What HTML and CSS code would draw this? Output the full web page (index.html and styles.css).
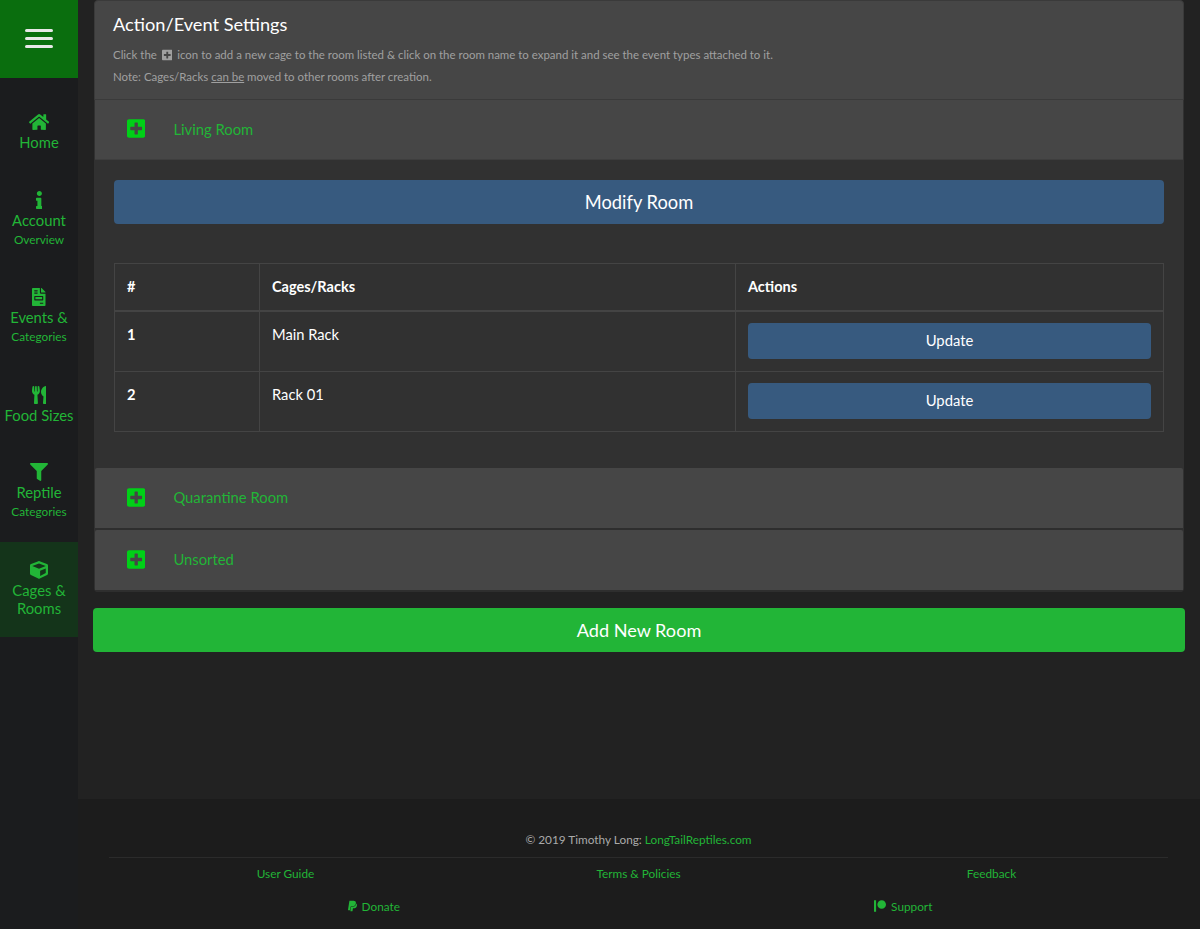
FILE: index.html
```html
<!DOCTYPE html>
<html>
<head>
	<title>Cages &amp; Rooms</title>
	<link rel="stylesheet" href="styles.css">
</head>
<body>
	<div class="page">
		<nav class="sidebar">
			<div class="menu-toggle">
				<span class="bar"></span>
				<span class="bar"></span>
				<span class="bar"></span>
			</div>
			<ul class="nav">
				<li class="nav-item nav-short">
					<svg class="nav-icon" viewBox="0 0 576 512"><path d="M280.37 148.26L96 300.11V464a16 16 0 0 0 16 16l112.06-.29a16 16 0 0 0 15.92-16V368a16 16 0 0 1 16-16h64a16 16 0 0 1 16 16v95.64a16 16 0 0 0 16 16.05L464 480a16 16 0 0 0 16-16V300L295.67 148.26a12.19 12.19 0 0 0-15.3 0zM571.6 251.47L488 182.56V44.05a12 12 0 0 0-12-12h-56a12 12 0 0 0-12 12v72.61L318.47 43a48 48 0 0 0-61 0L4.34 251.47a12 12 0 0 0-1.6 16.9l25.5 31A12 12 0 0 0 45.15 301l235.22-193.74a12.19 12.19 0 0 1 15.3 0L530.9 301a12 12 0 0 0 16.9-1.6l25.5-31a12 12 0 0 0-1.7-16.93z"/></svg>
					<span class="nav-label">Home</span>
				</li>
				<li class="nav-item">
					<svg class="nav-icon" viewBox="0 0 192 512"><path d="M20 424.229h20V279.771H20c-11.046 0-20-8.954-20-20V212c0-11.046 8.954-20 20-20h112c11.046 0 20 8.954 20 20v212.229h20c11.046 0 20 8.954 20 20V492c0 11.046-8.954 20-20 20H20c-11.046 0-20-8.954-20-20v-47.771c0-11.046 8.954-20 20-20zM96 0C56.235 0 24 32.235 24 72s32.235 72 72 72 72-32.235 72-72S135.764 0 96 0z"/></svg>
					<span class="nav-label">Account</span>
					<span class="nav-sub">Overview</span>
				</li>
				<li class="nav-item">
					<svg class="nav-icon" viewBox="0 0 384 512"><path d="M288 256H96v64h192v-64zm89-151L279.1 7c-4.5-4.5-10.6-7-17-7H256v128h128v-6.1c0-6.3-2.5-12.4-7-16.9zm-153 31V0H24C10.7 0 0 10.7 0 24v464c0 13.3 10.7 24 24 24h336c13.3 0 24-10.7 24-24V160H248c-13.2 0-24-10.8-24-24zM64 72c0-4.42 3.58-8 8-8h80c4.42 0 8 3.58 8 8v16c0 4.42-3.58 8-8 8H72c-4.42 0-8-3.58-8-8V72zm0 64c0-4.42 3.58-8 8-8h80c4.42 0 8 3.58 8 8v16c0 4.42-3.58 8-8 8H72c-4.42 0-8-3.58-8-8v-16zm256 304c0 4.42-3.58 8-8 8h-80c-4.42 0-8-3.58-8-8v-16c0-4.42 3.58-8 8-8h80c4.42 0 8 3.58 8 8v16zm0-200v96c0 8.84-7.16 16-16 16H80c-8.84 0-16-7.16-16-16v-96c0-8.84 7.16-16 16-16h224c8.84 0 16 7.16 16 16z"/></svg>
					<span class="nav-label">Events &amp;</span>
					<span class="nav-sub">Categories</span>
				</li>
				<li class="nav-item nav-short">
					<svg class="nav-icon" viewBox="0 0 416 512"><path d="M207.9 15.2c.8 4.7 16.1 94.5 16.1 128.8 0 52.3-27.8 89.6-68.9 104.6L168 486.7c.7 13.7-10.2 25.3-24 25.3H80c-13.7 0-24.7-11.5-24-25.3l12.9-238.1C27.7 233.6 0 196.2 0 144 0 109.6 15.3 19.9 16.1 15.2 19.3-5.1 61.4-5.4 64 16.3v141.2c1.3 3.4 15.1 3.2 16 0 1.4-25.3 7.9-139.2 8-141.8 3.3-20.8 44.7-20.8 47.9 0 .2 2.7 6.6 116.5 8 141.8.9 3.2 14.8 3.4 16 0V16.3c2.6-21.6 44.8-21.4 48-1.1zm119.2 285.7l-15 185.1c-1.2 14 9.9 26 23.9 26h56c13.3 0 24-10.7 24-24V24c0-13.2-10.7-24-24-24-82.5 0-221.4 178.5-64.9 300.9z"/></svg>
					<span class="nav-label">Food Sizes</span>
				</li>
				<li class="nav-item">
					<svg class="nav-icon" viewBox="0 0 512 512"><path d="M487.976 0H24.028C2.71 0-8.047 25.866 7.058 40.971L192 225.941V432c0 7.831 3.821 15.17 10.237 19.662l80 55.98C298.02 518.69 320 507.493 320 487.98V225.941l184.947-184.97C520.021 25.896 509.338 0 487.976 0z"/></svg>
					<span class="nav-label">Reptile</span>
					<span class="nav-sub">Categories</span>
				</li>
				<li class="nav-item active">
					<svg class="nav-icon" viewBox="0 0 512 512"><path d="M239.1 6.3l-208 78c-18.7 7-31.1 25-31.1 45v225.1c0 18.2 10.3 34.8 26.5 42.9l208 104c13.5 6.8 29.4 6.8 42.9 0l208-104c16.3-8.1 26.5-24.8 26.5-42.9V129.3c0-20-12.4-37.9-31.1-44.9l-208-78C262 2.2 250 2.2 239.1 6.3zM256 68.4l192 72v1.1l-192 78-192-78v-1.1l192-72zm32 356V275.5l160-65v133.9l-160 80z"/></svg>
					<span class="nav-label">Cages &amp;</span>
					<span class="nav-label">Rooms</span>
				</li>
			</ul>
		</nav>

		<div class="right">
			<main class="content">
				<section class="card">
					<div class="intro">
						<h4 class="intro-title">Action/Event Settings</h4>
						<p class="intro-text">Click the <svg class="inline-plus" viewBox="0 0 448 512"><path d="M400 32H48C21.5 32 0 53.5 0 80v352c0 26.5 21.5 48 48 48h352c26.5 0 48-21.5 48-48V80c0-26.5-21.5-48-48-48zm-32 252c0 6.6-5.4 12-12 12h-92v92c0 6.6-5.4 12-12 12h-56c-6.6 0-12-5.4-12-12v-92H92c-6.6 0-12-5.4-12-12v-56c0-6.6 5.4-12 12-12h92v-92c0-6.6 5.4-12 12-12h56c6.6 0 12 5.4 12 12v92h92c6.6 0 12 5.4 12 12v56z"/></svg> icon to add a new cage to the room listed &amp; click on the room name to expand it and see the event types attached to it.</p>
						<p class="intro-text">Note: Cages/Racks <u>can be</u> moved to other rooms after creation.</p>
					</div>

					<div class="room-head">
						<svg class="room-plus" viewBox="0 0 448 512"><path d="M400 32H48C21.5 32 0 53.5 0 80v352c0 26.5 21.5 48 48 48h352c26.5 0 48-21.5 48-48V80c0-26.5-21.5-48-48-48zm-32 252c0 6.6-5.4 12-12 12h-92v92c0 6.6-5.4 12-12 12h-56c-6.6 0-12-5.4-12-12v-92H92c-6.6 0-12-5.4-12-12v-56c0-6.6 5.4-12 12-12h92v-92c0-6.6 5.4-12 12-12h56c6.6 0 12 5.4 12 12v92h92c6.6 0 12 5.4 12 12v56z"/></svg>
						<span class="room-name">Living Room</span>
					</div>
					<div class="room-body">
						<button class="btn btn-blue btn-wide">Modify Room</button>
						<table class="cages">
							<thead>
								<tr>
									<th class="col-num">#</th>
									<th class="col-name">Cages/Racks</th>
									<th>Actions</th>
								</tr>
							</thead>
							<tbody>
								<tr>
									<th>1</th>
									<td>Main Rack</td>
									<td><button class="btn btn-blue btn-row">Update</button></td>
								</tr>
								<tr>
									<th>2</th>
									<td>Rack 01</td>
									<td><button class="btn btn-blue btn-row">Update</button></td>
								</tr>
							</tbody>
						</table>
					</div>

					<div class="room-head room-closed">
						<svg class="room-plus" viewBox="0 0 448 512"><path d="M400 32H48C21.5 32 0 53.5 0 80v352c0 26.5 21.5 48 48 48h352c26.5 0 48-21.5 48-48V80c0-26.5-21.5-48-48-48zm-32 252c0 6.6-5.4 12-12 12h-92v92c0 6.6-5.4 12-12 12h-56c-6.6 0-12-5.4-12-12v-92H92c-6.6 0-12-5.4-12-12v-56c0-6.6 5.4-12 12-12h92v-92c0-6.6 5.4-12 12-12h56c6.6 0 12 5.4 12 12v92h92c6.6 0 12 5.4 12 12v56z"/></svg>
						<span class="room-name">Quarantine Room</span>
					</div>
					<div class="room-head room-closed">
						<svg class="room-plus" viewBox="0 0 448 512"><path d="M400 32H48C21.5 32 0 53.5 0 80v352c0 26.5 21.5 48 48 48h352c26.5 0 48-21.5 48-48V80c0-26.5-21.5-48-48-48zm-32 252c0 6.6-5.4 12-12 12h-92v92c0 6.6-5.4 12-12 12h-56c-6.6 0-12-5.4-12-12v-92H92c-6.6 0-12-5.4-12-12v-56c0-6.6 5.4-12 12-12h92v-92c0-6.6 5.4-12 12-12h56c6.6 0 12 5.4 12 12v92h92c6.6 0 12 5.4 12 12v56z"/></svg>
						<span class="room-name">Unsorted</span>
					</div>
				</section>

				<button class="btn btn-green">Add New Room</button>
			</main>

			<footer class="footer">
				<p class="copyright">&copy; 2019 Timothy Long: <a href="#">LongTailReptiles.com</a></p>
				<div class="footer-links three">
					<a href="#">User Guide</a>
					<a href="#">Terms &amp; Policies</a>
					<a href="#">Feedback</a>
				</div>
				<div class="footer-links two">
					<a href="#"><svg class="foot-icon" viewBox="0 0 384 512"><path d="M111.4 295.9c-3.5 19.2-17.4 108.7-21.5 134-.3 1.8-1 2.5-3 2.5H12.3c-7.6 0-13.1-6.6-12.1-13.9L58.8 46.6c1.5-9.6 10.1-16.9 20-16.9 152.3 0 165.1-3.7 204 11.4 60.1 23.3 65.6 79.5 44 140.3-21.5 62.6-72.5 89.5-140.1 90.3-43.4.7-69.5-7-75.3 24.2zM357.1 152c-1.8-1.3-2.5-1.8-3 1.3-2 11.4-5.1 22.5-8.8 33.6-39.9 113.8-150.5 103.9-204.5 103.9-6.1 0-10.1 3.3-10.9 9.4-22.6 140.4-27.1 169.7-27.1 169.7-1 7.1 3.5 12.9 10.6 12.9h63.5c8.6 0 15.7-6.3 17.4-14.9.7-5.4-1.1 6.1 14.4-91.3 4.6-22 14.3-19.7 29.3-19.7 71 0 126.4-28.8 142.9-112.3 6.5-34.8 4.6-71.4-23.8-92.6z"/></svg> Donate</a>
					<a href="#"><svg class="foot-icon" viewBox="0 0 512 512"><path d="M512 194.8c0 101.3-82.4 183.8-183.8 183.8-101.7 0-184.4-82.4-184.4-183.8 0-101.6 82.7-184.3 184.4-184.3C429.6 10.5 512 93.2 512 194.8zM0 501.5h90v-491H0v491z"/></svg> Support</a>
				</div>
			</footer>
		</div>
	</div>
</body>
</html>
```

FILE: styles.css
```css
* {
	box-sizing: border-box;
}
body {
	margin: 0;
	background: #222;
	font-family: Lato, "Liberation Sans", sans-serif;
	color: #fff;
}
.page {
	display: flex;
	height: 929px;
	overflow: hidden;
}

/* sidebar */
.sidebar {
	width: 78px;
	flex-shrink: 0;
	background: #1b1c1e;
}
.menu-toggle {
	height: 78px;
	padding-bottom: 2px;
	background: #0a6e0e;
	display: flex;
	flex-direction: column;
	justify-content: center;
	align-items: center;
	gap: 5px;
}
.bar {
	width: 28px;
	height: 3px;
	border-radius: 2px;
	background: #e8e8e8;
}
.nav {
	list-style: none;
	margin: 16px 0 0;
	padding: 0;
}
.nav-item {
	display: flex;
	flex-direction: column;
	align-items: center;
	height: 97.5px;
	padding-top: 19px;
	color: #22b537;
	text-align: center;
}
.nav-short {
	height: 77.5px;
}
.active {
	background: #14341a;
	height: 95.5px;
}
.nav-icon {
	height: 18px;
	margin-bottom: 2px;
	fill: currentColor;
	display: block;
}
.nav-label {
	font-size: 14.8px;
	line-height: 18px;
}
.nav-sub {
	font-size: 11.8px;
	line-height: 19px;
	margin-top: 1px;
}

/* main column */
.right {
	flex: 1;
	display: flex;
	flex-direction: column;
	min-width: 0;
}
.content {
	height: 799px;
	flex-shrink: 0;
	padding: 0 15px;
}
.card {
	margin: 0 1px;
	background: #313131;
	border-radius: 4px;
	overflow: hidden;
}
.intro {
	height: 100px;
	padding: 12px 18px 0;
	background: #464646;
	border: 1px solid #3a3a3a;
	border-radius: 4px 4px 0 0;
}
.intro-title {
	margin: 0 0 12px;
	font-size: 18.2px;
	font-weight: 400;
	line-height: 22px;
}
.intro-text {
	margin: 0 0 5.5px;
	font-size: 11.46px;
	line-height: 16px;
	color: #a0a0a0;
}
.inline-plus {
	height: 12px;
	margin: 0 2px;
	vertical-align: -2px;
	fill: #a0a0a0;
}
.room-head {
	display: flex;
	align-items: center;
	height: 60px;
	margin: 0 1px;
	padding-left: 32px;
	padding-bottom: 2px;
	background: #464646;
	border-bottom: 1px solid #3e3e3e;
}
.room-closed {
	height: 62px;
	border-radius: 2px 2px 0 0;
	border-bottom: 2px solid #2e2e2e;
}
.room-plus {
	height: 21px;
	fill: #00d017;
	flex-shrink: 0;
	margin-right: 28px;
}
.room-name {
	font-size: 14.8px;
	color: #22b537;
}
.room-body {
	padding: 20px 20px 36px;
	background: #313131;
}

/* buttons */
.btn {
	display: block;
	width: 100%;
	border: 0;
	border-radius: 4px;
	color: #fff;
	font-family: inherit;
	text-align: center;
}
.btn-blue {
	background: #375a7f;
}
.btn-wide {
	height: 44px;
	font-size: 18.3px;
}
.btn-row {
	height: 36px;
	padding-bottom: 3px;
	font-size: 14.8px;
}
.btn-green {
	height: 44px;
	margin-top: 16px;
	background: #22b537;
	font-size: 18.1px;
}

/* table */
.cages {
	width: 100%;
	margin-top: 39px;
	border-collapse: collapse;
	table-layout: fixed;
	font-size: 14.7px;
	border: 1px solid #444;
}
.cages th,
.cages td {
	padding: 11px 12px;
	border: 1px solid #444;
	text-align: left;
	vertical-align: top;
	line-height: 22px;
}
.cages td {
	height: 60.5px;
}
.cages thead th {
	height: 47px;
	padding-top: 12px;
	font-size: 14.5px;
	border-bottom-width: 2px;
}
.col-num {
	width: 145px;
}
.col-name {
	width: 476px;
}

/* footer */
.footer {
	flex: 1;
	padding: 32px 32px 0 31px;
	background: #1c1c1c;
	font-size: 11.8px;
}
.footer a {
	color: #22b537;
	text-decoration: none;
}
.copyright {
	margin: 0;
	height: 27px;
	line-height: 18px;
	text-align: center;
	color: #aaa;
	border-bottom: 1px solid #2b2b2b;
}
.footer-links {
	display: grid;
	text-align: center;
	line-height: 18px;
}
.three {
	grid-template-columns: 1fr 1fr 1fr;
	margin-top: 7px;
}
.two {
	grid-template-columns: 1fr 1fr;
	margin-top: 15px;
}
.foot-icon {
	height: 12px;
	vertical-align: -1px;
	fill: currentColor;
	margin-right: 2px;
}
```
